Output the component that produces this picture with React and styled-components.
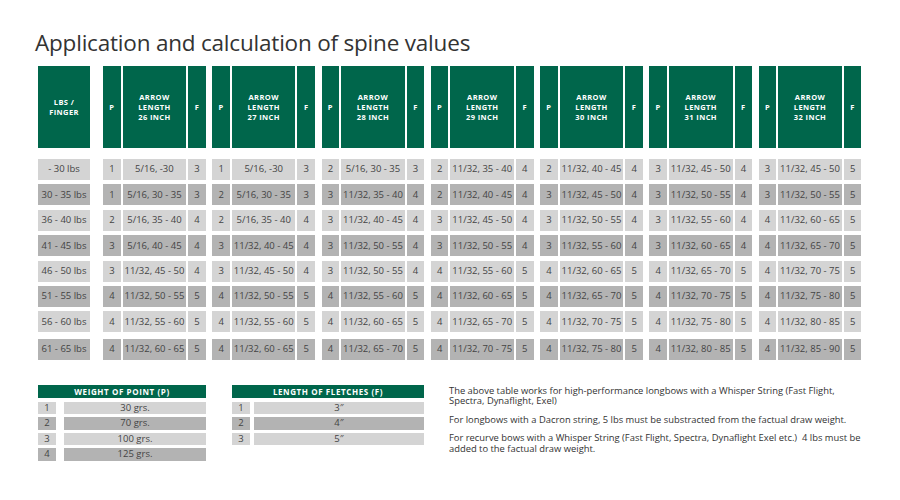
import styled, { createGlobalStyle } from "styled-components";

const GlobalStyle = createGlobalStyle`
  body {
    margin: 0;
    background: #fff;
    font-family: "Open Sans", "Liberation Sans", sans-serif;
  }
`;

const GREEN = "#00664b";
const LIGHT = "#d4d4d4";
const DARK = "#b3b3b3";

const Page = styled.div`
  width: 900px;
  height: 500px;
  box-sizing: border-box;
  padding: 27px 0 0 38px;
  overflow: hidden;
`;

const Title = styled.h1`
  margin: 0 0 7px -3px;
  font-size: 22.5px;
  line-height: 32px;
  font-weight: 400;
  letter-spacing: -0.2px;
  color: #333;
`;

const Table = styled.div`
  display: flex;
  flex-direction: column;
  gap: 4.4px;
`;

const Row = styled.div`
  display: flex;
  height: ${(p) => (p.head ? "82px" : "21px")};
  margin-bottom: ${(p) => (p.head ? "6.6px" : "0")};
  margin-top: ${(p) => (p.last ? "2.2px" : "0")};
`;

const LbsCell = styled.div`
  width: 52px;
  margin-right: 13px;
  display: flex;
  align-items: center;
  justify-content: center;
  background: ${(p) => (p.head ? GREEN : p.dark ? DARK : LIGHT)};
  color: ${(p) => (p.head ? "#fff" : "#444")};
  font-size: ${(p) => (p.head ? "7.5px" : "9.5px")};
  font-weight: ${(p) => (p.head ? 700 : 400)};
  letter-spacing: ${(p) => (p.head ? "0.4px" : "0")};
  line-height: 10.3px;
  text-align: center;
`;

const Groups = styled.div`
  display: flex;
  gap: 6.4px;
`;

const Group = styled.div`
  display: grid;
  grid-template-columns: 17.7px 63.5px 17.7px;
  column-gap: 2px;
`;

const Cell = styled.div`
  display: flex;
  align-items: center;
  justify-content: center;
  text-align: center;
  white-space: nowrap;
  background: ${(p) => (p.head ? GREEN : p.dark ? DARK : LIGHT)};
  color: ${(p) => (p.head ? "#fff" : "#444")};
  font-size: ${(p) => (p.head ? "7.5px" : "9.5px")};
  font-weight: ${(p) => (p.head ? 700 : 400)};
  letter-spacing: ${(p) => (p.head ? "0.4px" : "0")};
  line-height: 10.3px;
`;

const Bottom = styled.div`
  display: flex;
  align-items: flex-start;
  margin-top: 25px;
`;

const Legend = styled.div`
  width: ${(p) => p.width}px;
  margin-right: ${(p) => p.gap}px;
  display: flex;
  flex-direction: column;
  gap: 3.1px;
`;

const LegendHead = styled.div`
  height: 13.3px;
  margin-bottom: 0.3px;
  background: ${GREEN};
  color: #fff;
  font-size: 8px;
  font-weight: 700;
  letter-spacing: 0.6px;
  display: flex;
  align-items: center;
  justify-content: center;
`;

const LegendRow = styled.div`
  display: flex;
  height: 12.5px;
  gap: ${(p) => p.gap}px;
`;

const LegendCell = styled.div`
  flex: ${(p) => (p.num ? "0 0 18px" : "1")};
  background: ${(p) => (p.dark ? DARK : LIGHT)};
  color: #444;
  font-size: 9.5px;
  line-height: 12.5px;
  text-align: center;
`;

const Notes = styled.div`
  width: 416px;
  color: #333;
  font-size: 9.4px;
  line-height: 10.5px;
  margin-top: 1px;

  p {
    margin: 0 0 7.8px;
  }
`;

const lengths = [26, 27, 28, 29, 30, 31, 32];

const rows = [
  ["- 30 lbs", [[1, "5/16, -30", 3], [1, "5/16, -30", 3], [2, "5/16, 30 - 35", 3], [2, "11/32, 35 - 40", 4], [2, "11/32, 40 - 45", 4], [3, "11/32, 45 - 50", 4], [3, "11/32, 45 - 50", 5]]],
  ["30 - 35 lbs", [[1, "5/16, 30 - 35", 3], [2, "5/16, 30 - 35", 3], [3, "11/32, 35 - 40", 4], [2, "11/32, 40 - 45", 4], [3, "11/32, 45 - 50", 4], [3, "11/32, 50 - 55", 4], [3, "11/32, 50 - 55", 5]]],
  ["36 - 40 lbs", [[2, "5/16, 35 - 40", 4], [2, "5/16, 35 - 40", 4], [3, "11/32, 40 - 45", 4], [3, "11/32, 45 - 50", 4], [3, "11/32, 50 - 55", 4], [3, "11/32, 55 - 60", 4], [4, "11/32, 60 - 65", 5]]],
  ["41 - 45 lbs", [[3, "5/16, 40 - 45", 4], [3, "11/32, 40 - 45", 4], [3, "11/32, 50 - 55", 4], [3, "11/32, 50 - 55", 4], [3, "11/32, 55 - 60", 4], [3, "11/32, 60 - 65", 4], [4, "11/32, 65 - 70", 5]]],
  ["46 - 50 lbs", [[3, "11/32, 45 - 50", 4], [3, "11/32, 45 - 50", 4], [3, "11/32, 50 - 55", 4], [4, "11/32, 55 - 60", 5], [4, "11/32, 60 - 65", 5], [4, "11/32, 65 - 70", 5], [4, "11/32, 70 - 75", 5]]],
  ["51 - 55 lbs", [[4, "11/32, 50 - 55", 5], [4, "11/32, 50 - 55", 5], [4, "11/32, 55 - 60", 5], [4, "11/32, 60 - 65", 5], [4, "11/32, 65 - 70", 5], [4, "11/32, 70 - 75", 5], [4, "11/32, 75 - 80", 5]]],
  ["56 - 60 lbs", [[4, "11/32, 55 - 60", 5], [4, "11/32, 55 - 60", 5], [4, "11/32, 60 - 65", 5], [4, "11/32, 65 - 70", 5], [4, "11/32, 70 - 75", 5], [4, "11/32, 75 - 80", 5], [4, "11/32, 80 - 85", 5]]],
  ["61 - 65 lbs", [[4, "11/32, 60 - 65", 5], [4, "11/32, 60 - 65", 5], [4, "11/32, 65 - 70", 5], [4, "11/32, 70 - 75", 5], [4, "11/32, 75 - 80", 5], [4, "11/32, 80 - 85", 5], [4, "11/32, 85 - 90", 5]]],
];

const points = ["30 grs.", "70 grs.", "100 grs.", "125 grs."];
const fletches = ["3\u2033", "4\u2033", "5\u2033"];

function LegendTable({ title, items, width, gap, inner }) {
  return (
    <Legend width={width} gap={gap}>
      <LegendHead>{title}</LegendHead>
      {items.map((v, i) => (
        <LegendRow key={v} gap={inner}>
          <LegendCell num dark={i % 2 === 1}>{i + 1}</LegendCell>
          <LegendCell dark={i % 2 === 1}>{v}</LegendCell>
        </LegendRow>
      ))}
    </Legend>
  );
}

export default function App() {
  return (
    <>
      <GlobalStyle />
      <Page>
        <Title>Application and calculation of spine values</Title>
        <Table>
          <Row head>
            <LbsCell head>
              LBS /<br />FINGER
            </LbsCell>
            <Groups>
              {lengths.map((len) => (
                <Group key={len}>
                  <Cell head>P</Cell>
                  <Cell head>
                    ARROW
                    <br />
                    LENGTH
                    <br />
                    {len} INCH
                  </Cell>
                  <Cell head>F</Cell>
                </Group>
              ))}
            </Groups>
          </Row>
          {rows.map(([lbs, groups], r) => {
            const dark = r % 2 === 1;
            return (
              <Row key={lbs} last={r === rows.length - 1}>
                <LbsCell dark={dark}>{lbs}</LbsCell>
                <Groups>
                  {groups.map(([p, spine, f], g) => (
                    <Group key={g}>
                      <Cell dark={dark}>{p}</Cell>
                      <Cell dark={dark}>{spine}</Cell>
                      <Cell dark={dark}>{f}</Cell>
                    </Group>
                  ))}
                </Groups>
              </Row>
            );
          })}
        </Table>
        <Bottom>
          <LegendTable title="WEIGHT OF POINT (P)" items={points} width={168} gap={26} inner={8} />
          <LegendTable title="LENGTH OF FLETCHES (F)" items={fletches} width={192} gap={25} inner={4} />
          <Notes>
            <p>
              The above table works for high-performance longbows with a Whisper String (Fast Flight, Spectra,
              Dynaflight, Exel)
            </p>
            <p>For longbows with a Dacron string, 5 lbs must be substracted from the factual draw weight.</p>
            <p>
              For recurve bows with a Whisper String (Fast Flight, Spectra, Dynaflight Exel etc.)&nbsp; 4 lbs must be
              added to the factual draw weight.
            </p>
          </Notes>
        </Bottom>
      </Page>
    </>
  );
}
